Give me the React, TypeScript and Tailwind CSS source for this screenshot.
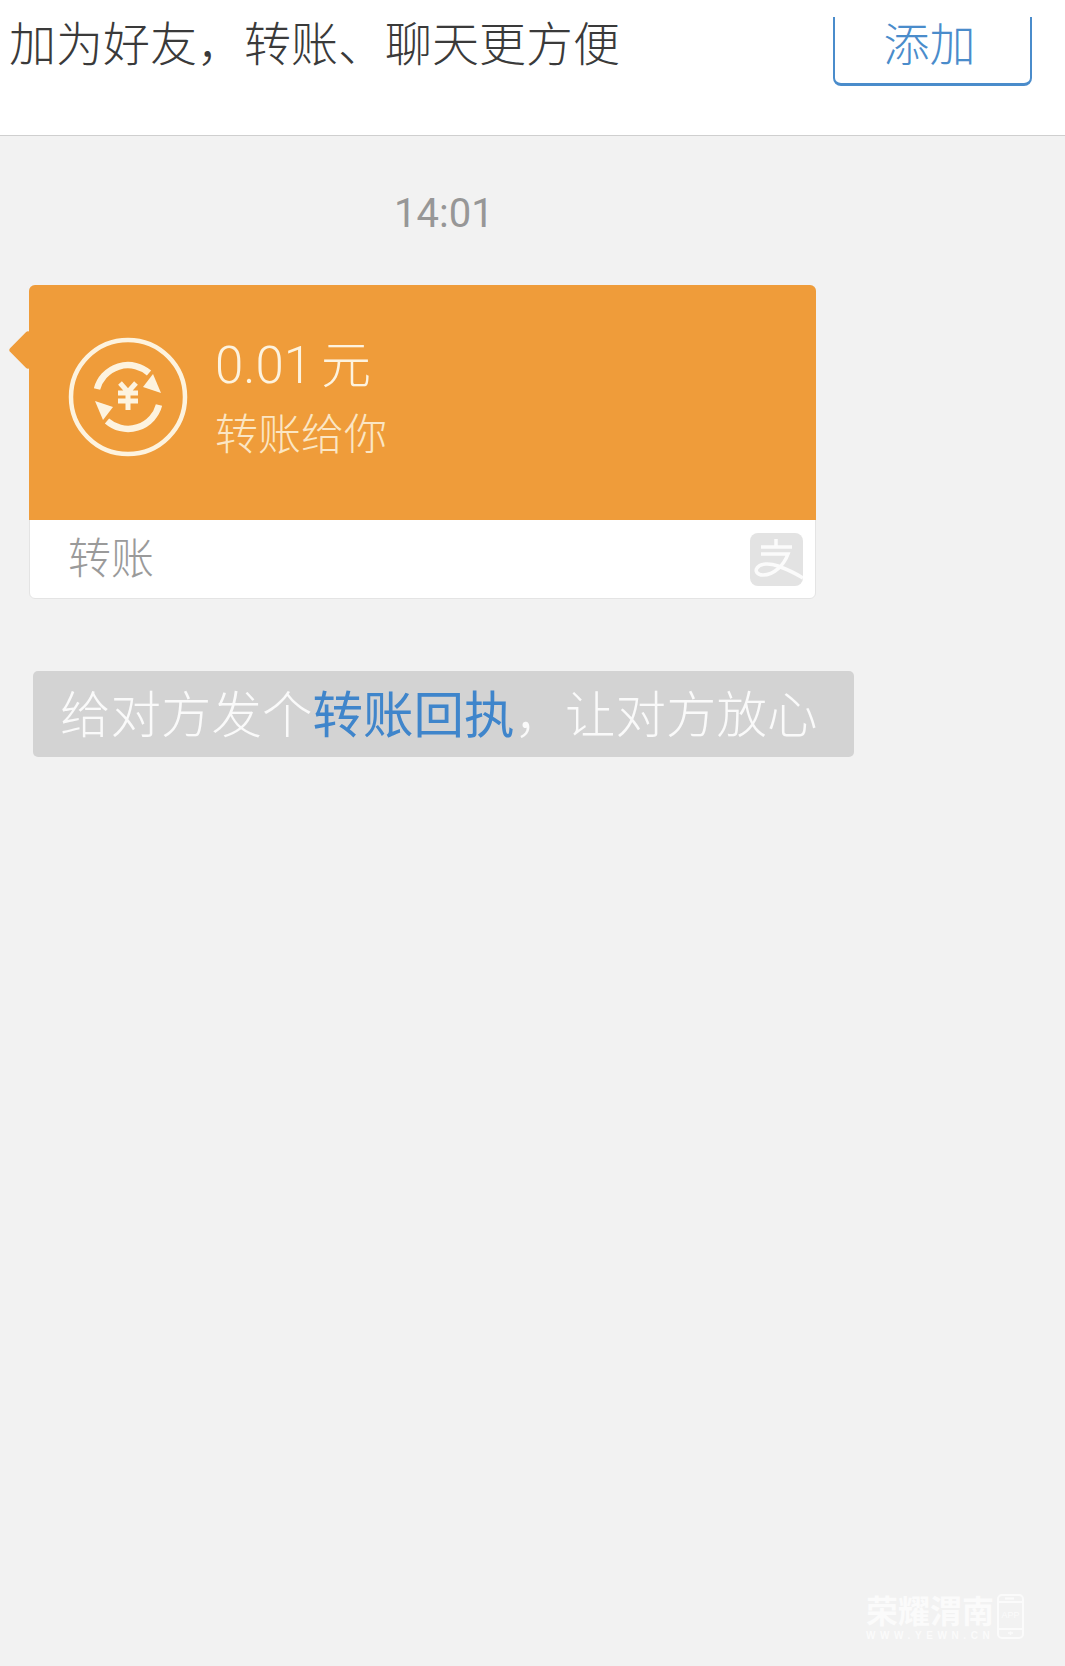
import React from 'react';

const cjk = { fontFamily: '"Noto Sans CJK SC", sans-serif' };
const latin = { fontFamily: 'Roboto, "Noto Sans CJK SC", sans-serif' };

function TransferIcon() {
  return (
    <svg viewBox="0 0 120 120" className="w-[120px] h-[120px] shrink-0" fill="none" stroke="#fdf3df">
      <circle cx="60" cy="60" r="57" strokeWidth="4.5" />
      {/* two arrows going round the yen sign */}
      <path d="M29 52 A32 32 0 0 1 81 36" strokeWidth="6.5" />
      <path d="M91 68 A32 32 0 0 1 39 84" strokeWidth="6.5" />
      <path d="M75 50 L93 56 L85 37 Z" fill="#fdf3df" stroke="none" />
      <path d="M45 70 L27 64 L35 83 Z" fill="#fdf3df" stroke="none" />
      <path d="M52 46 L60 55 L68 46 M60 55 V73 M50 56 H70 M50 64 H70" strokeWidth="5" />
    </svg>
  );
}

function AlipayIcon() {
  return (
    <svg viewBox="0 0 53 53" className="w-[53px] h-[53px] mt-[2px]">
      <rect width="53" height="53" rx="8" fill="#e3e3e3" />
      <path
        d="M11 14 H42 M26 6 V14 M11 21 H38 C34 32 24 42 13 42 C7 42 5 38 7 35 C10 30 20 30 28 33 C36 36 45 40 53 45"
        fill="none"
        stroke="#fbfbfb"
        strokeWidth="3.5"
      />
    </svg>
  );
}

function PhoneMark() {
  return (
    <svg viewBox="0 0 27 45" className="w-[27px] h-[45px] mt-[1px] shrink-0" fill="none" stroke="#fbfbfb" strokeWidth="2">
      <rect x="1" y="1" width="25" height="43" rx="4" />
      <path d="M1 8 H26 M1 35 H26 M8 4.5 H17" />
      <path d="M11 39 H16 M13.5 37.5 V41" strokeWidth="1.5" />
      <text x="13.5" y="24" textAnchor="middle" fill="#fbfbfb" stroke="none" fontSize="9" fontFamily="Liberation Sans, sans-serif">
        APP
      </text>
    </svg>
  );
}

export default function App() {
  return (
    <div className="relative w-full h-[1666px] overflow-hidden bg-[#f2f2f2]" style={cjk}>
      {/* top bar */}
      <div className="h-[136px] bg-white border-b border-[#cfcfcf] flex justify-between pl-[9px] pr-[33px]">
        <div className="h-[82px] flex items-center text-[47px] font-light text-[#3a3a3a] whitespace-nowrap">
          加为好友，转账、聊天更方便
        </div>
        <div className="mt-[17px] w-[199px] h-[69px] border-x-2 border-b-[3px] border-[#4a8ccb] rounded-b-[8px] flex items-center justify-center pb-[18px] pr-[6px] text-[46px] font-light text-[#4a8ccb]">
          添加
        </div>
      </div>

      <div className="pt-[50px] pl-[394px] text-[40px] leading-[56px] text-[#979797]" style={latin}>
        14:01
      </div>

      {/* transfer card */}
      <div className="relative mt-[43px] ml-[29px] w-[787px] h-[314px] rounded-[6px] bg-white border border-[#e4e4e4] flex flex-col">
        <div className="absolute -left-[16px] top-[50px] w-[28px] h-[28px] rotate-45 rounded-[3px] bg-[#ef9c3a]" />
        <div className="relative h-[235px] -m-px rounded-t-[6px] bg-[#ef9c3a] flex items-start pl-[39px] pt-[52px] gap-[27px]">
          <TransferIcon />
          <div className="flex flex-col text-[#fdf3df]">
            <div className="flex items-baseline text-[51px] leading-[60px] font-light -mt-[6px]" style={latin}>
              0.01<span className="ml-[9px] text-[50px]" style={cjk}>元</span>
            </div>
            <div className="text-[43px] leading-[60px] font-light mt-[5px] text-[#fbe6c4]">转账给你</div>
          </div>
        </div>
        <div className="flex-1 flex items-center justify-between pl-[38px] pr-[12px]">
          <span className="text-[43px] leading-[60px] -mt-[8px] font-light text-[#9a9a9a]">转账</span>
          <AlipayIcon />
        </div>
      </div>

      {/* hint banner */}
      <div className="mt-[72px] ml-[33px] w-[821px] h-[86px] rounded-[5px] bg-[#d3d3d3] flex items-center pl-[27px] pb-[4px] text-[50.5px] font-light text-[#fafafa] whitespace-nowrap">
        给对方发个<span className="text-[#3f85cb] font-normal">转账回执</span>，让对方放心
      </div>

      {/* watermark */}
      <div className="absolute left-[866px] top-[1593px] flex items-start gap-[3px] text-[#fbfbfb]">
        <div className="w-[128px] flex flex-col">
          <div className="text-[32px] leading-[32px] font-bold whitespace-nowrap">荣耀渭南</div>
          <div className="mt-[5px] text-[10px] leading-[12px] font-bold tracking-[4.6px] whitespace-nowrap" style={{ fontFamily: '"Liberation Sans", sans-serif' }}>
            WWW.YEWN.CN
          </div>
        </div>
        <PhoneMark />
      </div>
    </div>
  );
}
